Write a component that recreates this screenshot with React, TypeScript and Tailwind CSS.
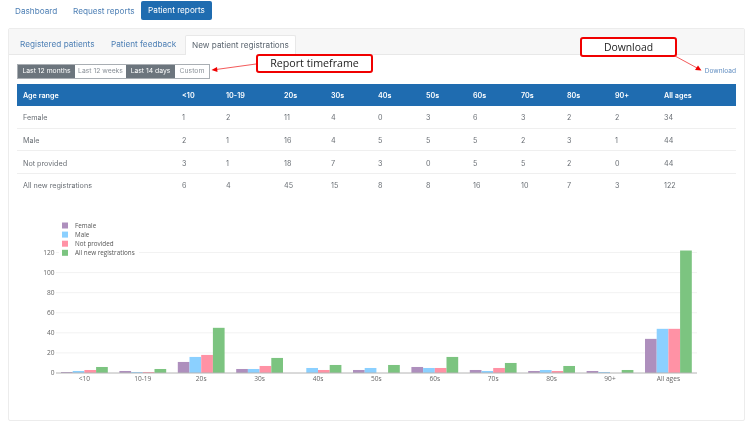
import React from "react";

const ROW_GRID =
  "grid grid-cols-[159px_44px_58px_47px_47px_48px_47px_48px_46px_48px_49px_1fr] items-center px-[6px]";

const columns = ["<10", "10-19", "20s", "30s", "40s", "50s", "60s", "70s", "80s", "90+", "All ages"];

const rows: { label: string; values: number[] }[] = [
  { label: "Female", values: [1, 2, 11, 4, 0, 3, 6, 3, 2, 2, 34] },
  { label: "Male", values: [2, 1, 16, 4, 5, 5, 5, 2, 3, 1, 44] },
  { label: "Not provided", values: [3, 1, 18, 7, 3, 0, 5, 5, 2, 0, 44] },
  { label: "All new registrations", values: [6, 4, 45, 15, 8, 8, 16, 10, 7, 3, 122] },
];

const seriesColors = ["#ae8fbd", "#8bd0ff", "#ff92a5", "#7cc480"];
const ticks = [0, 20, 40, 60, 80, 100, 120];

function Chart() {
  // svg sits at page x=17, y=210
  const baseY = 163;
  const scale = 1.004;
  const barW = 11.7;
  const groupW = 58.4;
  const startX = 44;

  return (
    <svg width="719" height="190" className="block" fontFamily="'Open Sans', sans-serif">
      {ticks.map((t) => {
        const y = baseY - t * scale;
        return (
          <g key={t}>
            {t > 0 && <line x1="39" x2="680" y1={y} y2={y} stroke="#f2f2f2" strokeWidth="1" />}
            <text x="37.5" y={y + 2.4} textAnchor="end" fontSize="6.6" fill="#666">
              {t}
            </text>
          </g>
        );
      })}
      {columns.map((c, g) => {
        const x0 = startX + g * groupW;
        return (
          <g key={c}>
            {rows.map((r, s) => (
              <rect
                key={r.label}
                x={x0 + s * barW}
                y={baseY - r.values[g] * scale}
                width={barW}
                height={r.values[g] * scale}
                fill={seriesColors[s]}
              />
            ))}
            <text x={x0 + 2 * barW} y={baseY + 7.6} textAnchor="middle" fontSize="6.6" fill="#666">
              {c}
            </text>
          </g>
        );
      })}
      <line x1="39" x2="680" y1={baseY} y2={baseY} stroke="#b4b4b4" strokeWidth="1" />
      <rect x="42" y="9" width="80" height="39" fill="#fff" />
      {rows.map((r, s) => (
        <g key={r.label}>
          <rect x="45" y={12.5 + s * 9.1} width="6" height="6" fill={seriesColors[s]} />
          <text x="58" y={17.8 + s * 9.1} fontSize="6.3" fill="#555">
            {r.label}
          </text>
        </g>
      ))}
    </svg>
  );
}

function Callouts() {
  return (
    <>
      <div className="absolute left-[256px] top-[54px] flex h-[19px] w-[117px] items-center justify-center rounded-[3px] border-2 border-[#f00000] bg-white font-['Open_Sans',sans-serif] text-[10.7px] text-[#222]">
        Report timeframe
      </div>
      <div className="absolute left-[580px] top-[37px] flex h-[20px] w-[97px] items-center justify-center rounded-[3px] border-2 border-[#f00000] bg-white pt-[1px] font-['Open_Sans',sans-serif] text-[10.4px] text-[#222]">
        Download
      </div>
      <svg width="752" height="428" className="pointer-events-none absolute left-0 top-0">
        <line x1="256" y1="64" x2="216" y2="69.5" stroke="#f03030" strokeWidth="0.8" />
        <polygon points="211.5,70 217,67 217.5,72" fill="#f00000" />
        <line x1="675" y1="56" x2="698" y2="68.5" stroke="#f03030" strokeWidth="0.8" />
        <polygon points="701.5,70.5 695,70 698,65.5" fill="#f00000" />
      </svg>
    </>
  );
}

export default function App() {
  return (
    <div className="relative h-[428px] w-[752px] overflow-hidden bg-white font-['Inter',sans-serif] blur-[0.45px]">
      <nav className="flex h-[28px] items-start pt-[1px] text-[8.2px] text-[#4f80b5]">
        <a className="ml-[15px] mt-[6px] w-[42px] whitespace-nowrap leading-[9px]">Dashboard</a>
        <a className="ml-[16px] mt-[6px] w-[60px] whitespace-nowrap leading-[9px]">Request reports</a>
        <a className="ml-[8px] flex h-[19px] w-[71px] items-center justify-center rounded-[2px] bg-[#1f6cb0] text-white">
          Patient reports
        </a>
      </nav>

      <div className="mx-[8px] h-[393px] w-[737px] rounded-[2px] border border-[#ececec]">
        <div className="flex h-[26px] items-end border-b border-[#e8e8e8] bg-[#f7f7f7] pl-[11px] text-[8.2px] text-[#4f80b5]">
          <a className="flex h-[19px] w-[75px] items-center whitespace-nowrap">Registered patients</a>
          <a className="ml-[16px] flex h-[19px] w-[65px] items-center whitespace-nowrap">Patient feedback</a>
          <a className="-mb-px ml-[9px] flex h-[20px] w-[111px] items-center justify-center rounded-t-[2px] border border-b-0 border-[#e8e8e8] bg-white text-[#5c6670]">
            New patient registrations
          </a>
        </div>

        <div className="px-[8px] pt-[9px]">
          <div className="flex items-center justify-between">
            <div className="flex h-[15px] w-fit border border-[#a9aeb3] text-[6.8px]">
              <span className="flex w-[57px] items-center justify-center bg-[#6c757d] text-white">Last 12 months</span>
              <span className="flex w-[51px] items-center justify-center bg-white text-[#8b9299]">Last 12 weeks</span>
              <span className="flex w-[49px] items-center justify-center bg-[#6c757d] text-white">Last 14 days</span>
              <span className="flex w-[34px] items-center justify-center bg-white text-[#8b9299]">Custom</span>
            </div>
            <a className="pt-[1px] text-[6.6px] text-[#5f8cc0]">Download</a>
          </div>

          <div className={`${ROW_GRID} mt-[5px] h-[22px] bg-[#1f6cb0] pt-[2px] text-[7.2px] font-semibold text-white`}>
            <span>Age range</span>
            {columns.map((c) => (
              <span key={c}>{c}</span>
            ))}
          </div>
          {rows.map((r, i) => (
            <div
              key={r.label}
              className={`${ROW_GRID} h-[22.6px] text-[7.2px] text-[#6a6f75] ${i < rows.length - 1 ? "border-b border-[#efefef] pt-[4px]" : "pt-[2px]"}`}
            >
              <span>{r.label}</span>
              {r.values.map((v, j) => (
                <span key={j}>{v}</span>
              ))}
            </div>
          ))}

          <div className="mt-[13.6px]">
            <Chart />
          </div>
        </div>
      </div>

      <Callouts />
    </div>
  );
}
